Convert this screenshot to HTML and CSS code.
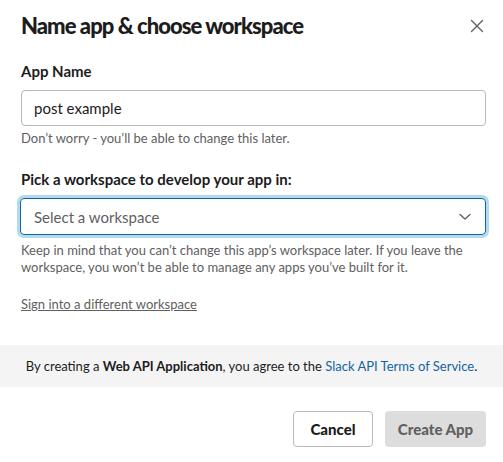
FILE: index.html
```html
<!DOCTYPE html>
<html>
<head>
<meta charset="utf-8">
<link rel="stylesheet" href="styles.css">
</head>
<body>
<div class="modal">
  <div class="header">
    <h1 class="title">Name app &amp; choose workspace</h1>
    <button class="close" aria-label="Close">
      <svg width="14" height="14" viewBox="0 0 14 14"><path d="M1.5 1.5 L12.5 12.5 M12.5 1.5 L1.5 12.5" stroke="#616061" stroke-width="1.4" fill="none" stroke-linecap="round"/></svg>
    </button>
  </div>
  <div class="body">
    <label class="label">App Name</label>
    <div class="input">post example</div>
    <p class="hint">Don’t worry - you’ll be able to change this later.</p>

    <label class="label label-2">Pick a workspace to develop your app in:</label>
    <div class="select">
      <span class="placeholder">Select a workspace</span>
      <svg class="chev" width="12" height="8" viewBox="0 0 12 8"><path d="M1 1.5 L6 6 L11 1.5" stroke="#616061" stroke-width="1.4" fill="none" stroke-linecap="round" stroke-linejoin="round"/></svg>
    </div>
    <p class="hint hint-2">Keep in mind that you can’t change this app’s workspace later. If you leave the workspace, you won’t be able to manage any apps you’ve built for it.</p>
    <a class="signin" href="#">Sign into a different workspace</a>
  </div>
  <div class="terms">By creating a <b>Web API Application</b>, you agree to the <a href="#">Slack API Terms of Service</a>.</div>
  <div class="footer">
    <button class="btn btn-cancel">Cancel</button>
    <button class="btn btn-create">Create App</button>
  </div>
</div>
</body>
</html>
```

FILE: styles.css
```css
* { box-sizing: border-box; }
html, body { margin: 0; padding: 0; background: #fff; }
body {
  font-family: Lato, "Liberation Sans", sans-serif;
  color: #1d1c1d;
  width: 503px;
  height: 462px;
  overflow: hidden;
}
.modal { width: 503px; }
.header {
  display: flex;
  align-items: center;
  justify-content: space-between;
  padding: 11px 18px 0 21px;
  height: 41px;
}
.title {
  margin: 0;
  font-size: 22px;
  font-weight: 900;
  letter-spacing: -0.95px;
  line-height: 30px;
}
.close {
  border: 0;
  background: none;
  padding: 0;
  width: 16px;
  height: 16px;
  display: flex;
  align-items: center;
  justify-content: center;
}
.body { padding: 19px 17px 0 20px; display: flex; flex-direction: column; }
.label {
  font-size: 15px;
  font-weight: 700;
  line-height: 22px;
  margin: 0 0 8px 1px;
}
.label-2 { margin-top: 21px; }
.input {
  height: 36px;
  margin-left: 1px;
  border: 1px solid #bbbabb;
  border-radius: 4px;
  padding: 0 12px;
  font-size: 15px;
  line-height: 34px;
}
.hint {
  margin: 4px 0 0 1px;
  font-size: 13px;
  line-height: 17px;
  color: #616061;
}
.select {
  height: 37px;
  border: 1px solid #1264a3;
  border-radius: 4px;
  box-shadow: 0 0 0 3px #b2dbef;
  display: flex;
  align-items: center;
  justify-content: space-between;
  padding: 0 14px 0 13px;
  margin-top: 0;
}
.placeholder { font-size: 15px; color: #616061; }
.hint-2 { margin-top: 7px; }
.signin {
  margin: 20px 0 0 1px;
  font-size: 13px;
  line-height: 17px;
  color: #616061;
  text-decoration: underline;
  align-self: flex-start;
}
.terms {
  margin-top: 32px;
  height: 42px;
  background: #f4f4f4;
  font-size: 13px;
  color: #1d1c1d;
  display: flex;
  align-items: center;
  justify-content: center;
  white-space: pre;
}
.terms b { font-weight: 700; }
.terms a { color: #1264a3; text-decoration: none; }
.footer {
  display: flex;
  justify-content: flex-end;
  gap: 12px;
  padding: 24px 17px 0 0;
}
.btn {
  height: 36px;
  border-radius: 4px;
  font-family: Lato, "Liberation Sans", sans-serif;
  font-size: 15px;
  font-weight: 900;
  padding: 0 8px;
  white-space: nowrap;
}
.btn-cancel { width: 80px; background: #fff; border: 1px solid #bbbabb; color: #1d1c1d; }
.btn-create { width: 101px; background: #dddddd; border: 0; color: #616061; }
```
